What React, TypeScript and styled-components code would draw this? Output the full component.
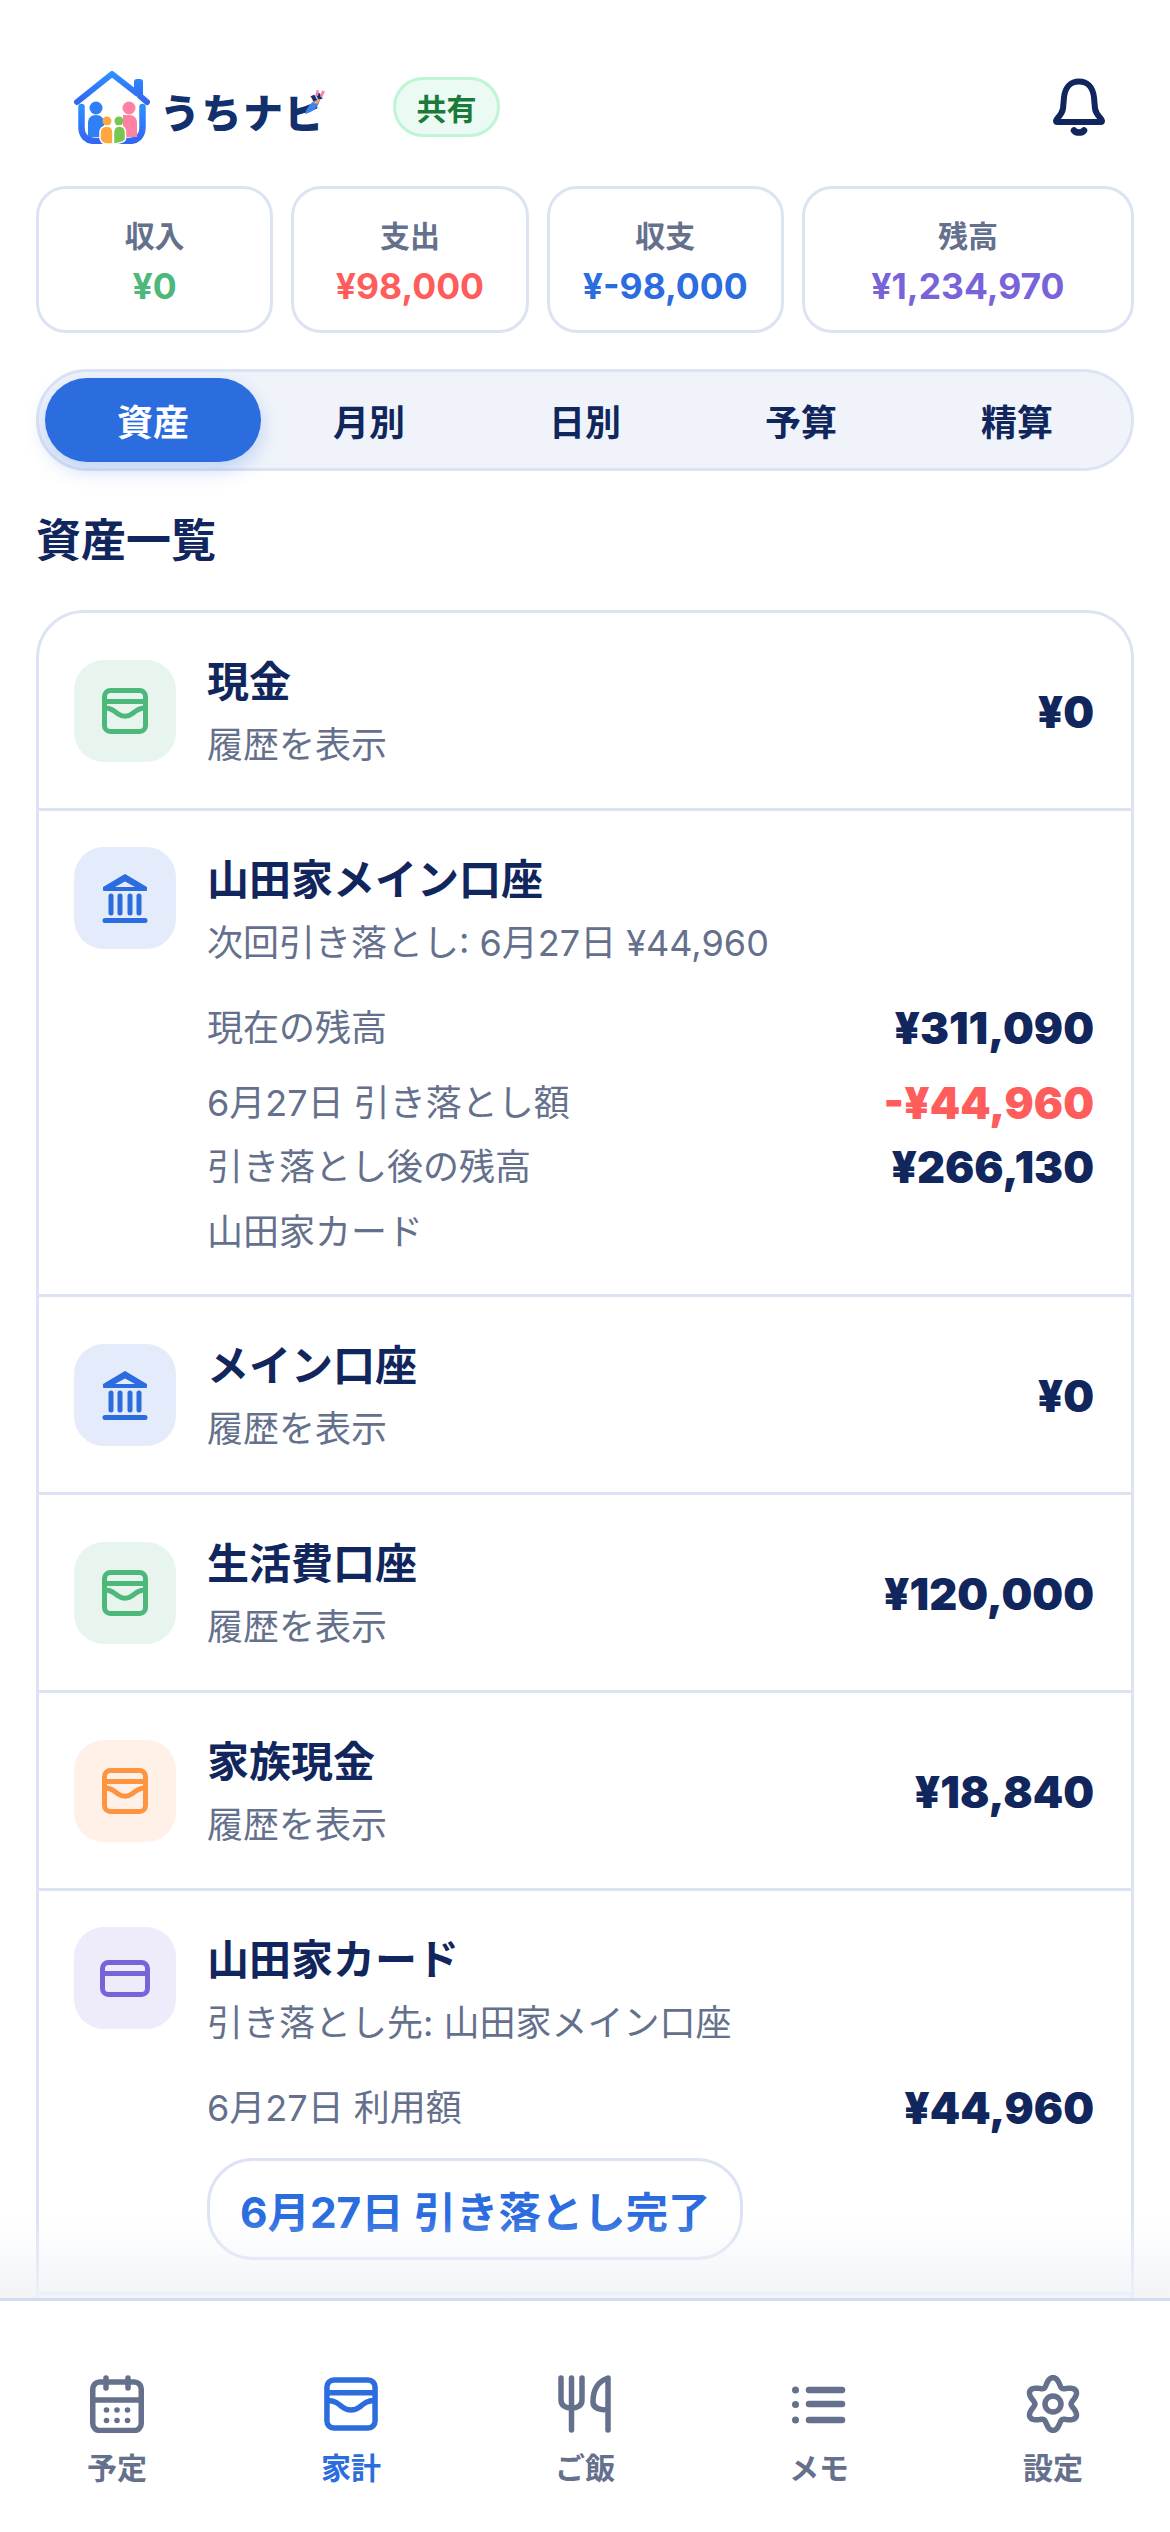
import React from "react";
import styled, { createGlobalStyle } from "styled-components";

const Global = createGlobalStyle`
  html, body { margin: 0; padding: 0; background: #fff; }
  body { font-family: Inter, "Noto Sans CJK JP", sans-serif; }
  * { box-sizing: border-box; }
`;

const NAVY = "#10265c";
const GREY = "#64708c";
const LINE = "#dce4f4";
const BLUE = "#2b6cdf";
const GREEN = "#4cb87a";
const RED = "#ff5c5c";
const PURPLE = "#7863d8";
const ORANGE = "#ff9440";

const Page = styled.div`
  position: relative;
  width: 1170px;
  height: 2532px;
  overflow: hidden;
  background: #fff;
`;
const Header = styled.header`
  display: flex;
  align-items: center;
  height: 186px;
  padding: 28px 64px 0 74px;
`;
const Logo = styled.div`
  display: flex;
  align-items: center;
  position: relative;
  width: 319px;
`;
const LogoText = styled.span`
  margin-left: 10px;
  font-family: "Noto Sans CJK JP", sans-serif;
  font-size: 40px;
  line-height: 72px;
  font-weight: 900;
  letter-spacing: 1.500px;
  color: #12306b;
  position: relative;
  top: 4px;
`;
const Feather = styled.svg`
  position: absolute;
  left: 229px;
  top: 17px;
`;
const Badge = styled.span`
  display: flex;
  align-items: center;
  justify-content: center;
  width: 107px;
  height: 60px;
  border-radius: 30px;
  background: #ebfbf3;
  border: 3px solid #bef5d4;
  color: #1a7a3a;
  font-size: 30px;
  font-weight: 700;
`;
const Bell = styled.svg`
  margin-left: auto;
`;
const Summary = styled.section`
  display: grid;
  grid-template-columns: 1fr 1fr 1fr 1.4fr;
  gap: 18px;
  padding: 0 36px;
`;
const SummaryCard = styled.div`
  height: 147px;
  border: 3px solid ${LINE};
  border-radius: 30px;
  padding-top: 4px;
  display: flex;
  flex-direction: column;
  align-items: center;
  justify-content: center;
  gap: 7px;
`;
const SummaryLabel = styled.div`
  font-size: 30px;
  line-height: 44px;
  font-weight: 700;
  color: ${GREY};
`;
const SummaryValue = styled.div<{ $color: string }>`
  font-size: 35.500px;
  line-height: 44px;
  font-weight: 700;
  color: ${(p) => p.$color};
`;
const Tabs = styled.nav`
  display: grid;
  grid-template-columns: repeat(5, 1fr);
  height: 102px;
  margin: 36px 36px 0;
  padding: 6px;
  background: #f0f4fa;
  border: 3px solid ${LINE};
  border-radius: 51px;
`;
const Tab = styled.div<{ $active?: boolean }>`
  display: flex;
  align-items: center;
  justify-content: center;
  border-radius: 42px;
  font-size: 36px;
  font-weight: 700;
  color: ${(p) => (p.$active ? "#fff" : NAVY)};
  background: ${(p) => (p.$active ? BLUE : "transparent")};
  box-shadow: ${(p) => (p.$active ? "0 8px 20px rgba(43,108,223,0.25)" : "none")};
`;
const SectionTitle = styled.h2`
  margin: 39px 36px 0;
  font-size: 45px;
  line-height: 62px;
  font-weight: 700;
  color: ${NAVY};
`;
const List = styled.section`
  margin: 38px 36px 0;
  border: 3px solid ${LINE};
  border-radius: 48px;
  height: 1800px;
`;
const Row = styled.article`
  padding: 38px 37px 36px 35px;
  border-bottom: 3px solid ${LINE};
`;
const RowMain = styled.div<{ $top?: boolean }>`
  display: flex;
  align-items: ${(p) => (p.$top ? "flex-start" : "center")};
  height: ${(p) => (p.$top ? "auto" : "121px")};
`;
const IconTile = styled.div<{ $bg: string }>`
  flex: none;
  width: 102px;
  height: 102px;
  margin-top: -2px;
  border-radius: 30px;
  display: flex;
  align-items: center;
  justify-content: center;
  background: ${(p) => p.$bg};
`;
const RowText = styled.div<{ $top?: boolean }>`
  margin-left: 31px;
  flex: 1;
  padding-top: ${(p) => (p.$top ? "1px" : "4px")};
`;
const Name = styled.div`
  font-size: 42px;
  line-height: 60px;
  font-weight: 700;
  color: ${NAVY};
`;
const Sub = styled.div`
  font-size: 36px;
  line-height: 60px;
  color: ${GREY};
`;
const NameSub = styled(Sub)`
  margin-top: 3px;
`;
const Amount = styled.div<{ $color?: string }>`
  font-size: 43.400px;
  line-height: 60px;
  font-weight: 900;
  color: ${(p) => p.$color || NAVY};
`;
const Details = styled.div`
  margin: 25px 0 -4px 133px;
`;
const DetailLine = styled.div<{ $mt?: number }>`
  display: flex;
  justify-content: space-between;
  align-items: center;
  height: 60px;
  margin-top: ${(p) => p.$mt || 0}px;
`;
const DoneButton = styled.div`
  display: inline-flex;
  align-items: center;
  height: 102px;
  margin-top: 20px;
  padding: 0 30px;
  border: 3px solid ${LINE};
  border-radius: 46px;
  color: ${BLUE};
  font-size: 42.400px;
  font-weight: 700;
`;
const BottomNav = styled.footer`
  position: absolute;
  left: 0;
  right: 0;
  bottom: 0;
  height: 234px;
  display: grid;
  grid-template-columns: repeat(5, 1fr);
  padding-top: 74px;
  background: #fff;
  border-top: 3px solid #d2dcef;
  &::before {
    content: "";
    position: absolute;
    left: 0;
    right: 0;
    top: -83px;
    height: 80px;
    background: linear-gradient(to bottom, rgba(240, 242, 247, 0), rgba(240, 242, 247, 0.85));
  }
`;
const NavItem = styled.div<{ $active?: boolean }>`
  display: flex;
  flex-direction: column;
  align-items: center;
  gap: 15px;
  font-size: 30px;
  line-height: 40px;
  font-weight: 700;
  color: ${(p) => (p.$active ? BLUE : GREY)};
`;
const NavSlot = styled.div`
  display: flex;
  align-items: center;
  justify-content: center;
  height: 58px;
`;
const NavIcon = styled.svg`
  display: block;
`;

const Wallet = ({ color, size = 46, sw = 5 }: { color: string; size?: number; sw?: number }) => (
  <svg width={size} height={size} viewBox="0 0 46 46" fill="none" stroke={color} strokeWidth={(sw * 46) / size} strokeLinecap="round">
    <rect x="2.5" y="2.5" width="41" height="41" rx="6" />
    <path d="M3 13.5H43" />
    <path d="M3 20c6 0 9 2.5 12.500 5.500 4.500 3.500 10.500 3.500 15 0 3.500-3 6.500-5.500 12.500-5.500" />
  </svg>
);
const Bank = () => (
  <svg width="46" height="50" viewBox="0 0 46 50" fill="none">
    <path d="M23 2 44 14.500v2.500H2v-2.500Z" fill={BLUE} stroke={BLUE} strokeWidth="2" strokeLinejoin="round" />
    <path d="M23 8.500 33 14H13Z" fill="#e4ebfb" />
    <g stroke={BLUE} strokeWidth="5" strokeLinecap="round">
      <path d="M9 23v17M18 23v17M28 23v17M37 23v17" />
      <path d="M3 47.500H43" />
    </g>
  </svg>
);
const Card = () => (
  <svg width="50" height="37" viewBox="0 0 50 37" fill="none" stroke={PURPLE} strokeWidth="5">
    <rect x="2.500" y="2.500" width="45" height="32" rx="6" />
    <path d="M3 13.500H47" />
  </svg>
);

const gearPath = (() => {
  const pts: string[] = [];
  for (let i = 0; i < 144; i++) {
    const t = (i / 144) * Math.PI * 2;
    const r = 22.3 + 4.2 * Math.cos(6 * t);
    pts.push(`${(27 + r * Math.sin(t)).toFixed(2)} ${(29 - r * Math.cos(t)).toFixed(2)}`);
  }
  return "M" + pts.join("L") + "Z";
})();

const CalendarIcon = () => (
  <NavIcon width="54" height="58" viewBox="0 0 54 58" fill="none" stroke="currentColor" strokeWidth="5.500" strokeLinecap="round">
    <rect x="2.750" y="7" width="48.500" height="48.500" rx="7" />
    <path d="M3 25H51M16 3v10M38 3v10" />
    <g fill="currentColor" stroke="none">
      <circle cx="16.500" cy="35" r="2.800" /><circle cx="27" cy="35" r="2.800" /><circle cx="37.500" cy="35" r="2.800" />
      <circle cx="16.500" cy="45.500" r="2.800" /><circle cx="27" cy="45.500" r="2.800" /><circle cx="37.500" cy="45.500" r="2.800" />
    </g>
  </NavIcon>
);
const ForkIcon = () => (
  <NavIcon width="54" height="58" viewBox="0 0 54 58" fill="none" stroke="currentColor" strokeWidth="5.500" strokeLinecap="round" strokeLinejoin="round">
    <path d="M3 3v22c0 6 5 8 10.500 8S24 31 24 25V3M13.500 3v52" />
    <path d="M50 55V3c-9 3-15 11-15 24 0 5 4 8 15 8" />
  </NavIcon>
);
const MemoIcon = () => (
  <NavIcon width="54" height="58" viewBox="0 0 54 58" fill="none" stroke="currentColor" strokeWidth="6.500" strokeLinecap="round">
    <path d="M17 15H50M17 29H50M17 45H50" />
    <g fill="currentColor" stroke="none">
      <circle cx="3.500" cy="15" r="3.500" /><circle cx="3.500" cy="29.500" r="3.500" /><circle cx="3.500" cy="45" r="3.500" />
    </g>
  </NavIcon>
);
const GearIcon = () => (
  <NavIcon width="54" height="58" viewBox="0 0 54 58" fill="none" stroke="currentColor" strokeWidth="5.500" strokeLinejoin="round">
    <path d={gearPath} />
    <circle cx="27" cy="29" r="8" />
  </NavIcon>
);

const simpleRows = {
  cash: { bg: "#e8f5ee", icon: <Wallet color={GREEN} />, name: "現金", amount: "¥0" },
  main: { bg: "#e4ebfb", icon: <Bank />, name: "メイン口座", amount: "¥0" },
  life: { bg: "#e8f5ee", icon: <Wallet color={GREEN} />, name: "生活費口座", amount: "¥120,000" },
  family: { bg: "#fff1e8", icon: <Wallet color={ORANGE} />, name: "家族現金", amount: "¥18,840" },
};

const Simple = ({ k }: { k: keyof typeof simpleRows }) => {
  const r = simpleRows[k];
  return (
    <Row>
      <RowMain>
        <IconTile $bg={r.bg}>{r.icon}</IconTile>
        <RowText>
          <Name>{r.name}</Name>
          <NameSub>履歴を表示</NameSub>
        </RowText>
        <Amount>{r.amount}</Amount>
      </RowMain>
    </Row>
  );
};

export default function App() {
  return (
    <Page>
      <Global />
      <Header>
        <Logo>
          <svg width="76" height="73" viewBox="0 0 76 73" fill="none">
            <defs>
              <linearGradient id="lg" x1="0" y1="0" x2="0" y2="1">
                <stop offset="0" stopColor="#2b8fff" />
                <stop offset="1" stopColor="#3566f2" />
              </linearGradient>
            </defs>
            <path d="M3 31 38 3l25 19.500V11h3v14l7 6" stroke="url(#lg)" strokeWidth="6" strokeLinecap="round" strokeLinejoin="round" />
            <path d="M7.500 36v20c0 9 5 14 14 14h33c9 0 14-5 14-14V36" stroke="url(#lg)" strokeWidth="6.500" strokeLinecap="round" />
            <circle cx="22" cy="37" r="6.500" fill="#2f80f5" />
            <path d="M14 66V52c0-5 3-8 8-8s8 3 8 8v14Z" fill="#2f80f5" />
            <circle cx="55" cy="37" r="6.500" fill="#ff82a2" />
            <path d="M49 66V44h6c5 0 8 3 8 8v14Z" fill="#ff82a2" />
            <circle cx="33" cy="50" r="4.500" fill="#ffa63d" />
            <path d="M26 62c0-5 3-7 7-7s6 2 6 7v11h-7c-3 0-6-3-6-6Z" fill="#ffa63d" stroke="#fff" strokeWidth="1.500" />
            <circle cx="45" cy="50" r="4.500" fill="#78c552" />
            <path d="M39.500 62c0-5 2-7 6-7s6 2 6 7v6c0 2-4 4-12 5Z" fill="#78c552" stroke="#fff" strokeWidth="1.500" />
          </svg>
          <LogoText>うちナビ</LogoText>
          <Feather width="24" height="28" viewBox="0 0 24 28">
            <path d="M19 2.500l3 1-3 6-2-1ZM13.500 2l2.500.5-1 5.500-2.500-.5Z" fill="#ff82a2" />
            <path d="M2 26c2-8 8-14 15-15-1 7-6 13-15 15Z" fill="#3c82ee" />
            <path d="M10 15c2-2 5-3.500 7-4-.5 2-1.500 4-3 5Z" fill="#ff9a4d" />
          </Feather>
        </Logo>
        <Badge>共有</Badge>
        <Bell width="54" height="58" viewBox="0 0 54 58" fill="none" stroke={NAVY} strokeWidth="6" strokeLinecap="round" strokeLinejoin="round">
          <path d="M4 42.500c0-2 6-5 7-12l1-11C13 9 19 3.500 27 3.500S41 9 42 19.500l1 11c1 7 7 10 7 12 0 .8-.5 1.500-1.500 1.500h-43C4.500 44 4 43.300 4 42.500Z" />
          <path d="M22 52.500c2.500 2.800 7.500 2.800 10 0" strokeWidth="6.500" />
        </Bell>
      </Header>

      <Summary>
        <SummaryCard><SummaryLabel>収入</SummaryLabel><SummaryValue $color={GREEN}>¥0</SummaryValue></SummaryCard>
        <SummaryCard><SummaryLabel>支出</SummaryLabel><SummaryValue $color={RED}>¥98,000</SummaryValue></SummaryCard>
        <SummaryCard><SummaryLabel>収支</SummaryLabel><SummaryValue $color={BLUE}>¥-98,000</SummaryValue></SummaryCard>
        <SummaryCard><SummaryLabel>残高</SummaryLabel><SummaryValue $color={PURPLE}>¥1,234,970</SummaryValue></SummaryCard>
      </Summary>

      <Tabs>
        <Tab $active>資産</Tab>
        <Tab>月別</Tab>
        <Tab>日別</Tab>
        <Tab>予算</Tab>
        <Tab>精算</Tab>
      </Tabs>

      <SectionTitle>資産一覧</SectionTitle>

      <List>
        <Simple k="cash" />
        <Row>
          <RowMain $top>
            <IconTile $bg="#e4ebfb"><Bank /></IconTile>
            <RowText $top>
              <Name>山田家メイン口座</Name>
              <NameSub>次回引き落とし: 6月27日 ¥44,960</NameSub>
            </RowText>
          </RowMain>
          <Details>
            <DetailLine><Sub>現在の残高</Sub><Amount>¥311,090</Amount></DetailLine>
            <DetailLine $mt={15}><Sub>6月27日 引き落とし額</Sub><Amount $color={RED}>-¥44,960</Amount></DetailLine>
            <DetailLine $mt={4}><Sub>引き落とし後の残高</Sub><Amount>¥266,130</Amount></DetailLine>
            <DetailLine $mt={5}><Sub>山田家カード</Sub></DetailLine>
          </Details>
        </Row>
        <Simple k="main" />
        <Simple k="life" />
        <Simple k="family" />
        <Row>
          <RowMain $top>
            <IconTile $bg="#eeebfa"><Card /></IconTile>
            <RowText $top>
              <Name>山田家カード</Name>
              <NameSub>引き落とし先: 山田家メイン口座</NameSub>
            </RowText>
          </RowMain>
          <Details>
            <DetailLine><Sub>6月27日 利用額</Sub><Amount>¥44,960</Amount></DetailLine>
            <DoneButton>6月27日 引き落とし完了</DoneButton>
          </Details>
        </Row>
      </List>

      <BottomNav>
        <NavItem><NavSlot><CalendarIcon /></NavSlot>予定</NavItem>
        <NavItem $active><NavSlot><Wallet color={BLUE} size={54} sw={5.5} /></NavSlot>家計</NavItem>
        <NavItem><NavSlot><ForkIcon /></NavSlot>ご飯</NavItem>
        <NavItem><NavSlot><MemoIcon /></NavSlot>メモ</NavItem>
        <NavItem><NavSlot><GearIcon /></NavSlot>設定</NavItem>
      </BottomNav>
    </Page>
  );
}
